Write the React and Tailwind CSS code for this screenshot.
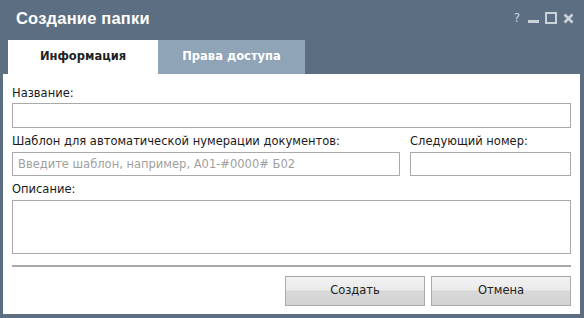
const fieldBorder = 'border border-[#a9a9a9] bg-white';

const Input = ({ className = '', placeholder }) => (
  <input
    className={`${fieldBorder} h-[24px] px-[5px] text-[11.5px] outline-none placeholder:text-[#a0a0a0] ${className}`}
    placeholder={placeholder}
  />
);

const Button = ({ children }) => (
  <button className="w-[140px] h-[30px] border border-[#aaaaaa] bg-[linear-gradient(#f2f2f2_0%,#ebebeb_45%,#d9d9d9_50%,#d2d2d2_100%)] text-[11.5px] text-[#222]">
    {children}
  </button>
);

export default function App() {
  return (
    <div className="w-[584px] h-[318px] bg-[#5c6f82] flex flex-col font-['DejaVu_Sans',sans-serif] text-[#1a1a1a] relative">
      {/* title bar */}
      <div className="h-[40px] flex items-center pl-[16px] pr-[10px]">
        <div className="text-white font-bold text-[16.5px] font-['Liberation_Sans',sans-serif] tracking-[0.2px] pb-[3px]">Создание папки</div>
        <div className="ml-auto flex items-center gap-[6px] text-[#c9d1d9] pb-[4px]">
          <span className="text-[12px] mr-[2px]">?</span>
          <svg width="11" height="11" viewBox="0 0 11 11"><rect x="0" y="7" width="11" height="3" fill="currentColor" /></svg>
          <svg width="12" height="12" viewBox="0 0 12 12"><rect x="1" y="1" width="10" height="10" fill="none" stroke="currentColor" strokeWidth="2" /></svg>
          <svg width="11" height="11" viewBox="0 0 11 11"><path d="M1.5 1.5L9.5 9.5M9.5 1.5L1.5 9.5" stroke="currentColor" strokeWidth="2.6" /></svg>
        </div>
      </div>

      {/* tabs */}
      <div className="h-[34px] flex pl-[8px] text-[11.5px] font-bold">
        <div className="w-[150px] bg-white flex items-center justify-center text-[#222]">Информация</div>
        <div className="w-[147px] bg-[#8fa4b7] flex items-center justify-center text-white">Права доступа</div>
      </div>

      {/* body */}
      <div className="flex-1 bg-white ml-[3px] mr-[4px] mb-[4px] px-[9px] pt-[12px] flex flex-col text-[11.5px]">
        <div className="leading-[15px] mb-[2px]">Название:</div>
        <Input className="w-full h-[25px]" />

        <div className="flex gap-[10px] mt-[6px]">
          <div className="flex flex-col flex-1">
            <div className="leading-[15px] mb-[3px]">Шаблон для автоматической нумерации документов:</div>
            <Input placeholder="Введите шаблон, например, А01-#0000# Б02" />
          </div>
          <div className="flex flex-col w-[161px]">
            <div className="leading-[15px] mb-[3px]">Следующий номер:</div>
            <Input />
          </div>
        </div>

        <div className="leading-[15px] mt-[6px] mb-[3px]">Описание:</div>
        <textarea className={`${fieldBorder} h-[54px] resize-none outline-none`} />

        <div className="h-[2px] bg-[#a9a9a9] mt-[11px]" />

        <div className="flex justify-end gap-[6px] mt-[9px]">
          <Button>Создать</Button>
          <Button>Отмена</Button>
        </div>
      </div>
    </div>
  );
}
